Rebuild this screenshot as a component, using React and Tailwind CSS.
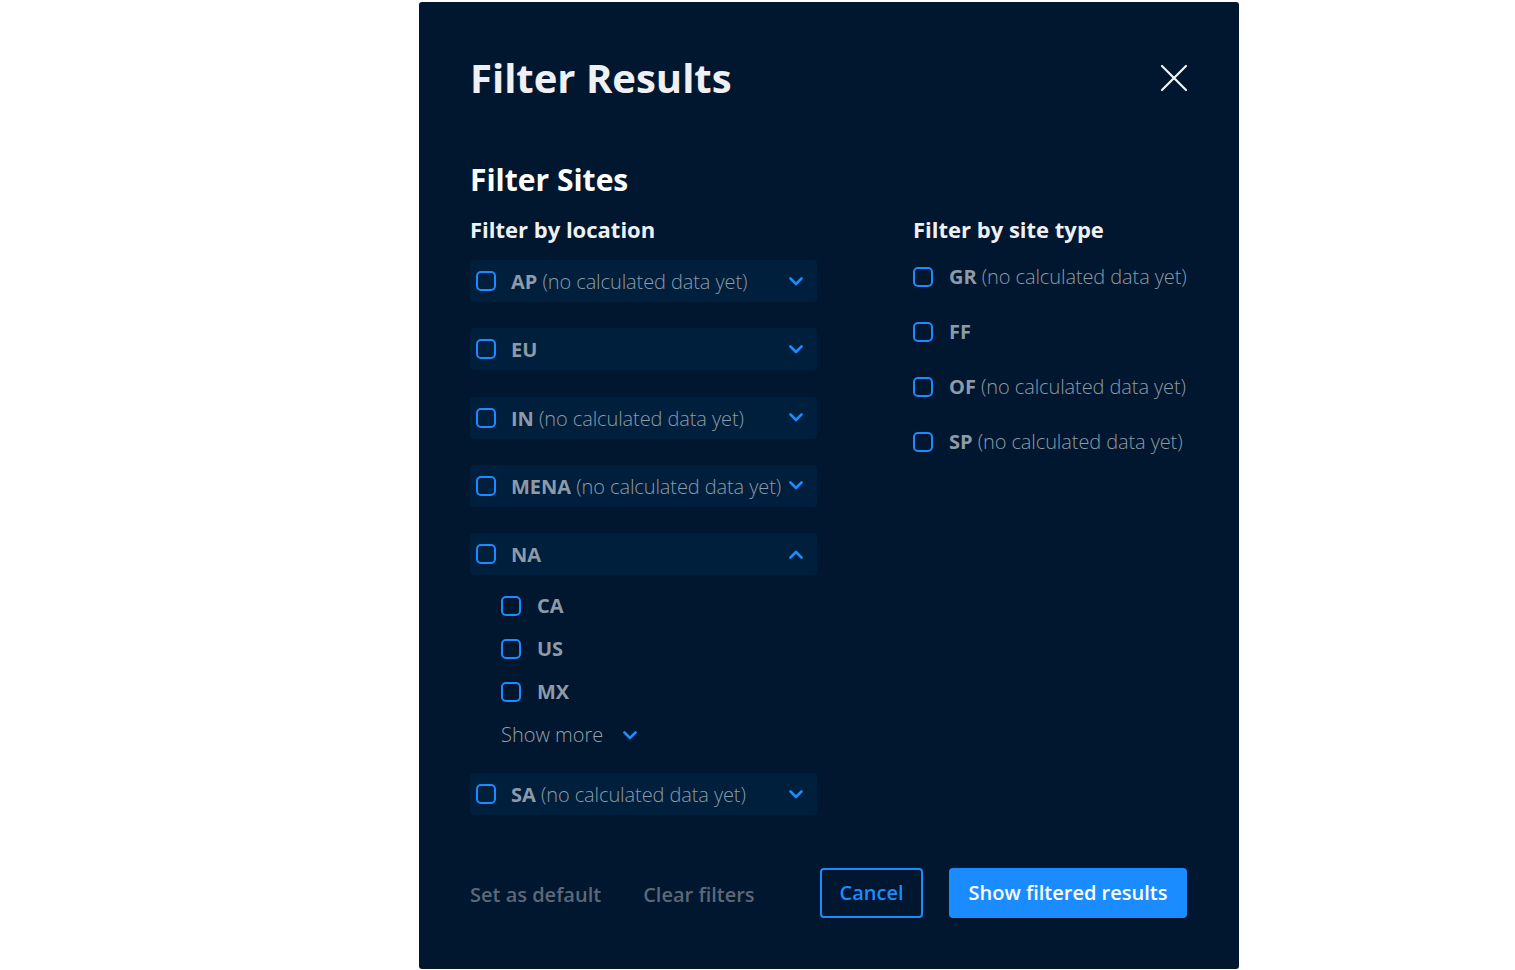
import React from 'react';

const Chevron = ({ up = false }) => (
  <svg width="14" height="9" viewBox="0 0 14 9" fill="none" className="shrink-0">
    <polyline
      points={up ? '1.5,7.5 7,2 12.5,7.5' : '1.5,1.5 7,7 12.5,1.5'}
      stroke="#1a8cff"
      strokeWidth="2.6"
      strokeLinecap="round"
      strokeLinejoin="round"
    />
  </svg>
);

const Box = () => <span className="w-5 h-5 shrink-0 rounded-[5px] border-2 border-[#1a8cff]" />;

const Label = ({ code, note }) => (
  <span className="text-[20px] leading-7 text-[#8e9aa7] whitespace-nowrap">
    <span className="font-bold">{code}</span>
    {note && <span className="font-light tracking-[-0.1px]"> (no calculated data yet)</span>}
  </span>
);

const RegionRow = ({ code, note, open }) => (
  <div className="h-[42px] flex items-center rounded-[4px] bg-[#001f3d] pl-[6px] pr-[14px]">
    <Box />
    <div className="ml-[15px] pt-[2px] flex-1 min-w-0">
      <Label code={code} note={note} />
    </div>
    <Chevron up={open} />
  </div>
);

const SubRow = ({ code }) => (
  <div className="h-7 flex items-center pl-[31px]">
    <Box />
    <div className="ml-4">
      <Label code={code} />
    </div>
  </div>
);

const TypeRow = ({ code, note }) => (
  <div className="h-7 flex items-center">
    <Box />
    <div className="ml-4">
      <Label code={code} note={note} />
    </div>
  </div>
);

export default function App() {
  return (
    <div className="min-h-screen bg-white" style={{ fontFamily: '"Open Sans", "Noto Sans", sans-serif' }}>
      <div className="ml-[419px] mt-[2px] w-[820px] h-[967px] rounded-[3px] bg-[#00172f] pl-[51px] pr-[52px] pt-[52px] flex flex-col">
        {/* Header */}
        <div className="h-12 flex items-center justify-between">
          <h1 className="text-[40px] leading-[48px] font-bold text-[#eef0f3]">Filter Results</h1>
          <svg width="28" height="28" viewBox="0 0 28 28" className="mr-[-1px]">
            <path d="M2 2 L26 26 M26 2 L2 26" stroke="#f2f4f7" strokeWidth="2.2" strokeLinecap="round" />
          </svg>
        </div>

        <h2 className="mt-[60px] text-[30px] leading-[36px] font-bold text-white">Filter Sites</h2>

        <div className="mt-[16px] flex">
          {/* Location */}
          <div className="w-[347px] shrink-0">
            <h3 className="text-[22px] leading-[30px] font-bold text-[#eef0f3]">Filter by location</h3>
            <div className="mt-[16px] flex flex-col gap-[26.3px]">
              <RegionRow code="AP" note />
              <RegionRow code="EU" />
              <RegionRow code="IN" note />
              <RegionRow code="MENA" note />
              <div>
                <RegionRow code="NA" open />
                <div className="mt-[17px] flex flex-col gap-[15px]">
                  <SubRow code="CA" />
                  <SubRow code="US" />
                  <SubRow code="MX" />
                  <div className="h-7 flex items-center pl-[31px] gap-[20px]">
                    <span className="text-[20px] font-light text-[#96a1ad]">Show more</span>
                    <Chevron />
                  </div>
                </div>
              </div>
              <div className="-mt-[2px]">
                <RegionRow code="SA" note />
              </div>
            </div>
          </div>

          {/* Site type */}
          <div className="ml-[96px] flex-1">
            <h3 className="text-[22px] leading-[30px] font-bold text-[#eef0f3]">Filter by site type</h3>
            <div className="mt-[19px] flex flex-col gap-[27px]">
              <TypeRow code="GR" note />
              <TypeRow code="FF" />
              <TypeRow code="OF" note />
              <TypeRow code="SP" note />
            </div>
          </div>
        </div>

        {/* Footer */}
        <div className="mt-[53px] flex items-center justify-between">
          <div className="flex items-center gap-[42px] pt-[3px] text-[20px] font-semibold text-[#5c6878]">
            <span>Set as default</span>
            <span>Clear filters</span>
          </div>
          <div className="flex items-center gap-[26px]">
            <button className="h-[50px] w-[103px] rounded-[4px] border-2 border-[#1a8cff] text-[20px] font-semibold text-[#1a8cff]">
              Cancel
            </button>
            <button className="h-[50px] w-[238px] rounded-[4px] bg-[#1a8cff] text-[20px] font-semibold text-white">
              Show filtered results
            </button>
          </div>
        </div>
      </div>
    </div>
  );
}
